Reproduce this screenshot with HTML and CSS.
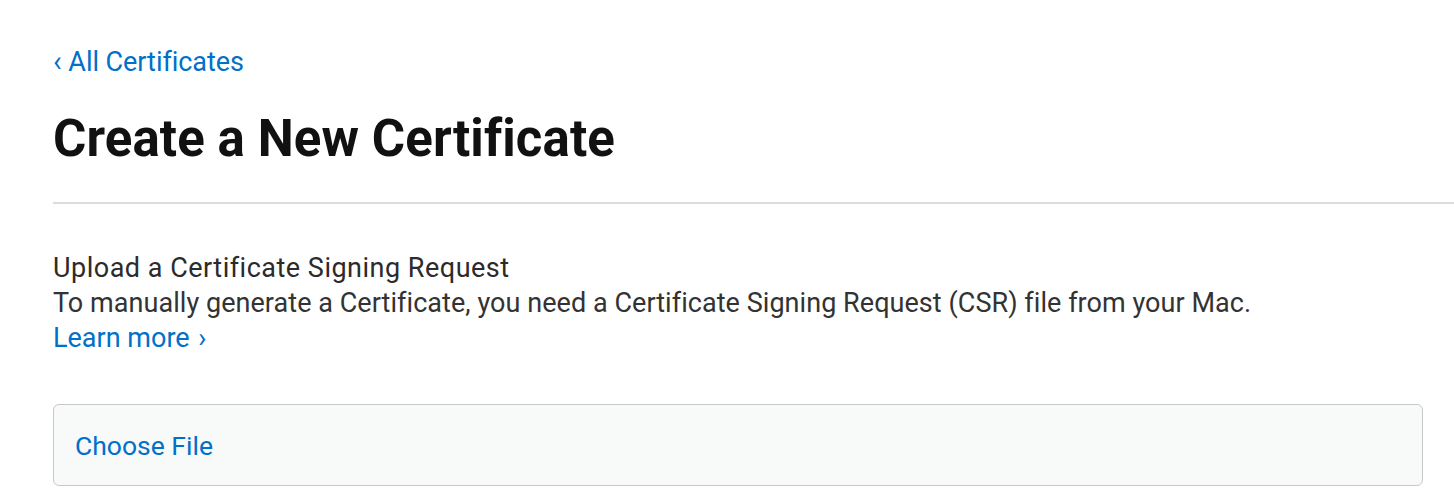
FILE: index.html
```html
<!DOCTYPE html>
<html lang="en">
<head>
<meta charset="utf-8">
<title>Create a New Certificate</title>
<link rel="stylesheet" href="styles.css">
</head>
<body>
<main class="page">
  <a class="back-link" href="#"><span class="chev">‹</span> All Certificates</a>
  <h1 class="title">Create a New Certificate</h1>
  <div class="divider"></div>
  <section class="upload">
    <h2 class="upload-title">Upload a Certificate Signing Request</h2>
    <p class="upload-desc">To manually generate a Certificate, you need a Certificate Signing Request (CSR) file from your Mac.</p>
    <a class="learn" href="#">Learn more <span class="chev-r">›</span></a>
  </section>
  <div class="file-box">
    <span class="file-btn">Choose File</span>
  </div>
</main>
</body>
</html>
```

FILE: styles.css
```css
html, body {
  margin: 0;
  padding: 0;
  background: #fff;
}
body {
  font-family: Roboto, "Noto Sans", sans-serif;
  color: #333;
  overflow: hidden;
}
.page {
  padding: 46px 0 0 53px;
  display: flex;
  flex-direction: column;
  align-items: stretch;
}
.back-link {
  color: #0070c9;
  text-decoration: none;
  font-size: 27px;
  line-height: 30px;
  align-self: flex-start;
  letter-spacing: -0.05px;
}
.chev {
  font-size: 29px;
}
.title {
  margin: 32px 0 0 0;
  font-size: 51px;
  line-height: 60px;
  font-weight: 700;
  color: #111;
  letter-spacing: 0.1px;
}
.divider {
  margin-top: 33px;
  height: 2px;
  background: #dcdcdc;
}
.upload {
  margin-top: 47px;
  display: flex;
  flex-direction: column;
  align-items: flex-start;
}
.upload-title {
  margin: 0;
  font-size: 27px;
  line-height: 35px;
  font-weight: 400;
  color: #2b2b2b;
  letter-spacing: 0.5px;
}
.upload-desc {
  margin: 0;
  font-size: 27px;
  line-height: 35px;
  color: #333;
  letter-spacing: 0.05px;
}
.learn {
  color: #0070c9;
  text-decoration: none;
  font-size: 27px;
  line-height: 35px;
}
.chev-r {
  margin-left: 2px;
}
.file-box {
  margin: 48px 31px 0 0;
  height: 82px;
  border: 1px solid #c8c8c8;
  border-radius: 6px;
  background: #f8f9f9;
  display: flex;
  align-items: center;
  padding-left: 21px;
  box-sizing: border-box;
}
.file-btn {
  color: #0070c9;
  font-size: 26.5px;
}
```
